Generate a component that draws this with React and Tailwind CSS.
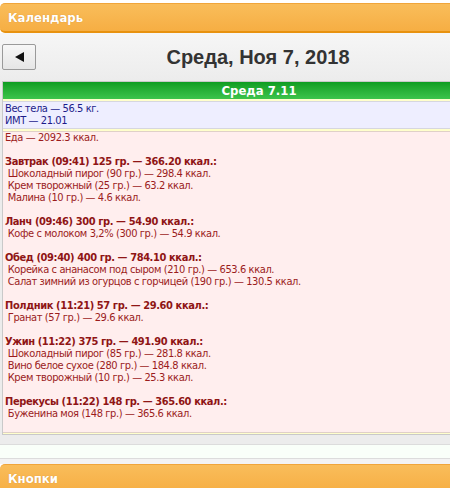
import React from "react";

const meals = [
  {
    title: "Завтрак (09:41) 125 гр. — 366.20 ккал.:",
    items: [
      "Шоколадный пирог (90 гр.) — 298.4 ккал.",
      "Крем творожный (25 гр.) — 63.2 ккал.",
      "Малина (10 гр.) — 4.6 ккал.",
    ],
  },
  {
    title: "Ланч (09:46) 300 гр. — 54.90 ккал.:",
    items: ["Кофе с молоком 3,2% (300 гр.) — 54.9 ккал."],
  },
  {
    title: "Обед (09:40) 400 гр. — 784.10 ккал.:",
    items: [
      "Корейка с ананасом под сыром (210 гр.) — 653.6 ккал.",
      "Салат зимний из огурцов с горчицей (190 гр.) — 130.5 ккал.",
    ],
  },
  {
    title: "Полдник (11:21) 57 гр. — 29.60 ккал.:",
    items: ["Гранат (57 гр.) — 29.6 ккал."],
  },
  {
    title: "Ужин (11:22) 375 гр. — 491.90 ккал.:",
    items: [
      "Шоколадный пирог (85 гр.) — 281.8 ккал.",
      "Вино белое сухое (280 гр.) — 184.8 ккал.",
      "Крем творожный (10 гр.) — 25.3 ккал.",
    ],
  },
  {
    title: "Перекусы (11:22) 148 гр. — 365.60 ккал.:",
    items: ["Буженина моя (148 гр.) — 365.6 ккал."],
  },
];

const Header = ({ children }) => (
  <div className="h-[30px] rounded-[5px] border-t border-b-2 border-t-[#f0a53a] border-b-[#e8920f] bg-gradient-to-b from-[#f9bd5a] to-[#f6ae43] flex items-center px-[8px] text-[13px] font-bold text-white [text-shadow:0_0_1px_rgba(150,80,0,0.4)]">
    {children}
  </div>
);

const App = () => {
  return (
    <div className="w-[450px] h-[488px] overflow-hidden bg-white font-['DejaVu_Sans_Condensed','DejaVu_Sans',sans-serif]">
      <div className="w-[516px] pt-[3px]">
        <Header>Календарь</Header>

        {/* navigation */}
        <div className="h-[48px] bg-gradient-to-b from-[#f6f6f6] to-[#ececec] flex items-center pl-[2px]">
          <button className="w-[34px] h-[26px] rounded-[2px] border border-[#9a9a9a] bg-gradient-to-b from-[#f7f7f7] to-[#e6e6e6] flex items-center justify-center">
            <svg width="9" height="10" viewBox="0 0 9 10">
              <polygon points="0,5 9,0 9,10" fill="#111" />
            </svg>
          </button>
          <div className="flex-1 text-center pr-[36px] font-['Liberation_Sans',Arial,sans-serif] text-[20px] font-bold text-[#333]">
            Среда, Ноя 7, 2018
          </div>
        </div>

        {/* day panel */}
        <div className="bg-[#ececec]">
          <div className="ml-[2px] border border-[#c9c9c9] bg-[#ffffcc] pb-[1px]">
            <div className="h-[17px] bg-gradient-to-b from-[#0c9d21] to-[#3cc44b] text-center text-[13px] leading-[17px] font-bold text-white">
              Среда 7.11
            </div>
            <div className="mt-[2px] border-y border-[#d6d6e0] bg-[#eeeeff] px-[2px] py-[1px] text-[11px] leading-[12px] tracking-[-0.4px] text-[#1c1c8a]">
              <div>Вес тела — 56.5 кг.</div>
              <div>ИМТ — 21.01</div>
            </div>
            <div className="mt-[2px] border-y border-[#e0d0c8] bg-[#ffeeee] px-[2px] pb-[12px] text-[11px] leading-[12px] tracking-[-0.4px] text-[#9b1c1c] whitespace-pre">
              <div>Еда — 2092.3 ккал.</div>
              {meals.map((m) => (
                <div key={m.title}>
                  <div>&nbsp;</div>
                  <div className="font-bold text-[#8f1515]">{m.title}</div>
                  {m.items.map((it) => (
                    <div key={it}>{" " + it}</div>
                  ))}
                </div>
              ))}
            </div>
          </div>
          <div className="h-[9px]" />
        </div>
        <div className="h-[15px] border-y border-[#dcdcdc] bg-[#f9fff9]" />
        <div className="h-[5px] bg-[#f3f3f3]" />
        <Header>Кнопки</Header>
      </div>
    </div>
  );
};

export default App;
